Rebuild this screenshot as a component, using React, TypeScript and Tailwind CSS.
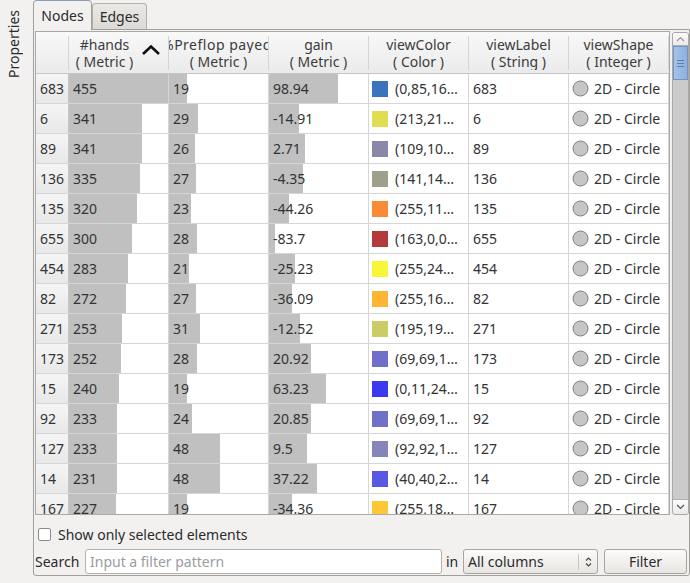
import React from "react";

type Row = {
  id: string;
  h: number;
  hw: number;
  p: number;
  pw: number;
  g: string;
  gw: number;
  c: string;
  ct: string;
};

const rows: Row[] = [
  { id: "683", h: 455, hw: 99, p: 19, pw: 18, g: "98.94", gw: 69, c: "#3a74be", ct: "(0,85,16…" },
  { id: "6", h: 341, hw: 73, p: 29, pw: 29, g: "-14.91", gw: 30, c: "#dede50", ct: "(213,21…" },
  { id: "89", h: 341, hw: 73, p: 26, pw: 26, g: "2.71", gw: 36, c: "#8b87a9", ct: "(109,10…" },
  { id: "136", h: 335, hw: 71, p: 27, pw: 27, g: "-4.35", gw: 34, c: "#a0a08a", ct: "(141,14…" },
  { id: "135", h: 320, hw: 68, p: 23, pw: 22, g: "-44.26", gw: 20, c: "#fa8a35", ct: "(255,11…" },
  { id: "655", h: 300, hw: 63, p: 28, pw: 28, g: "-83.7", gw: 6, c: "#b5393a", ct: "(163,0,0…" },
  { id: "454", h: 283, hw: 59, p: 21, pw: 20, g: "-25.23", gw: 26, c: "#f8f638", ct: "(255,24…" },
  { id: "82", h: 272, hw: 57, p: 27, pw: 27, g: "-36.09", gw: 23, c: "#fdb634", ct: "(255,16…" },
  { id: "271", h: 253, hw: 53, p: 31, pw: 31, g: "-12.52", gw: 31, c: "#cccc66", ct: "(195,19…" },
  { id: "173", h: 252, hw: 52, p: 28, pw: 28, g: "20.92", gw: 42, c: "#7070c8", ct: "(69,69,1…" },
  { id: "15", h: 240, hw: 50, p: 19, pw: 18, g: "63.23", gw: 57, c: "#3a3af0", ct: "(0,11,24…" },
  { id: "92", h: 233, hw: 48, p: 24, pw: 23, g: "20.85", gw: 42, c: "#7070c8", ct: "(69,69,1…" },
  { id: "127", h: 233, hw: 48, p: 48, pw: 51, g: "9.5", gw: 38, c: "#8585b9", ct: "(92,92,1…" },
  { id: "14", h: 231, hw: 48, p: 48, pw: 51, g: "37.22", gw: 48, c: "#5858e0", ct: "(40,40,2…" },
  { id: "167", h: 227, hw: 47, p: 19, pw: 18, g: "-34.36", gw: 23, c: "#fdc834", ct: "(255,18…" },
];

function HeaderCell({
  top,
  bottom,
  sort,
  clipTop,
}: {
  top: string;
  bottom: string;
  sort?: boolean;
  clipTop?: boolean;
}) {
  return (
    <div className="w-[100px] h-full flex items-center">
      <div className="flex-1 h-full flex items-center overflow-hidden">
        <div className="flex-1 flex flex-col items-center justify-center leading-[17px] overflow-hidden whitespace-nowrap">
          {clipTop ? (
            <div className="w-full flex overflow-hidden">
              <span className="-ml-[7px] tracking-[0.5px]">{top}</span>
            </div>
          ) : (
            <span>{top}</span>
          )}
          <span>{bottom}</span>
        </div>
        {sort && (
          <div className="w-[28px] flex items-center justify-start pl-[1px] -mt-[5px]">
            <svg width="20" height="12" viewBox="0 0 20 12">
              <polyline points="2,10 10,2.5 18,10" fill="none" stroke="#111" strokeWidth="2.6" />
            </svg>
          </div>
        )}
      </div>
      <div className="w-px h-[34px] bg-[#d4d4d4]" />
    </div>
  );
}

function BarCell({ w, text }: { w: number; text: string }) {
  return (
    <div className="w-[100px] h-full border-r border-[#d6d6d6] relative flex items-center pl-[4px]">
      <div className="absolute left-0 top-0 bottom-0 bg-[#c0c0c0]" style={{ width: w }} />
      <span className="relative">{text}</span>
    </div>
  );
}

export default function App() {
  return (
    <div className="w-[690px] h-[583px] bg-[#f2f1f0] flex text-[14px] text-[#3c3c3c] font-['Noto_Sans',sans-serif] overflow-hidden">
      {/* side label */}
      <div className="w-[33px] flex items-start pl-[7px] pt-[10px]">
        <span className="[writing-mode:vertical-rl] rotate-180 leading-[14px] text-[#2b2b2b]">Properties</span>
      </div>

      <div className="w-[657px] flex flex-col">
        {/* tabs */}
        <div className="h-[29px] flex items-end relative z-10">
          <div className="w-[59px] h-[30px] -mb-px border border-b-0 border-[#a39f9a] border-t-[#8d9db3] rounded-t-[4px] bg-[#f2f1f0] flex items-center justify-center text-[#2b2b2b]">
            Nodes
          </div>
          <div className="w-[55px] h-[26px] border border-b-0 border-[#b3afaa] rounded-t-[4px] bg-gradient-to-b from-[#ebe9e6] to-[#dcdad6] flex items-center justify-center text-[#2b2b2b]">
            Edges
          </div>
        </div>

        {/* panel */}
        <div className="w-[657px] h-[547px] border border-[#a39f9a] rounded-b-[3px] bg-[#f2f1f0] flex flex-col">
          <div className="mt-[1px] ml-[1px] h-[484px] flex">
            {/* table */}
            <div className="w-[635px] h-[484px] border border-[#a9a9a9] bg-white flex flex-col overflow-hidden text-[#333]">
              <div className="h-[42px] border-b border-[#c6c6c6] flex bg-gradient-to-b from-[#f8f8f8] to-[#ebebeb] text-[#3c3c3c]">
                <div className="w-[33px] h-full flex items-center">
                  <div className="flex-1" />
                  <div className="w-px h-[34px] bg-[#d4d4d4]" />
                </div>
                <HeaderCell top="#hands" bottom="( Metric )" sort />
                <HeaderCell top="%Preflop payed" bottom="( Metric )" clipTop />
                <HeaderCell top="gain" bottom="( Metric )" />
                <HeaderCell top="viewColor" bottom="( Color )" />
                <HeaderCell top="viewLabel" bottom="( String )" />
                <HeaderCell top="viewShape" bottom="( Integer )" />
              </div>
              <div className="flex-1 overflow-hidden">
                {rows.map((r) => (
                  <div key={r.id} className="h-[30px] flex border-b border-[#d6d6d6]">
                    <div className="w-[33px] h-full border-r border-[#c6c6c6] bg-gradient-to-b from-[#f5f5f5] to-[#e8e8e8] flex items-center pl-[4px]">
                      {r.id}
                    </div>
                    <BarCell w={r.hw} text={String(r.h)} />
                    <BarCell w={r.pw} text={String(r.p)} />
                    <BarCell w={r.gw} text={r.g} />
                    <div className="w-[100px] h-full border-r border-[#d6d6d6] flex items-center pl-[3px] whitespace-nowrap overflow-hidden">
                      <div className="w-[16px] h-[16px] shrink-0" style={{ backgroundColor: r.c }} />
                      <span className="ml-[7px]">{r.ct}</span>
                    </div>
                    <div className="w-[100px] h-full border-r border-[#d6d6d6] flex items-center pl-[4px]">{r.id}</div>
                    <div className="w-[100px] h-full border-r border-[#d6d6d6] flex items-center pl-[3px] whitespace-nowrap">
                      <svg width="17" height="17" viewBox="0 0 17 17" className="shrink-0">
                        <circle cx="8.5" cy="8.5" r="7.5" fill="#c6c6c6" stroke="#7d7d7d" strokeWidth="1" />
                      </svg>
                      <span className="ml-[5px]">2D - Circle</span>
                    </div>
                  </div>
                ))}
              </div>
            </div>

            {/* scrollbar */}
            <div className="ml-[2px] w-[17px] h-[484px] flex flex-col pt-[1px]">
              <div className="flex-1 border border-[#a8a8a8] rounded-[3px] bg-[#cbcbcb] flex flex-col overflow-hidden">
                <div className="h-[13px] bg-gradient-to-b from-[#fbfbfb] to-[#eaeaea] border-b border-[#b0b0b0] flex items-center justify-center">
                  <svg width="9" height="6" viewBox="0 0 9 6">
                    <polyline points="1,5 4.5,1.5 8,5" fill="none" stroke="#9a9a9a" strokeWidth="1.2" />
                  </svg>
                </div>
                <div className="h-[34px] bg-gradient-to-r from-[#a7c2e6] to-[#8fb0dc] border border-[#7195c8] flex flex-col items-center justify-center gap-[2px]">
                  <div className="w-[7px] h-px bg-[#5f7fae]" />
                  <div className="w-[7px] h-px bg-[#5f7fae]" />
                  <div className="w-[7px] h-px bg-[#5f7fae]" />
                </div>
                <div className="flex-1" />
                <div className="h-[15px] bg-gradient-to-b from-[#fbfbfb] to-[#eaeaea] border-t border-[#b0b0b0] flex items-center justify-center">
                  <svg width="9" height="6" viewBox="0 0 9 6">
                    <polyline points="1,1 4.5,4.5 8,1" fill="none" stroke="#555" strokeWidth="1.2" />
                  </svg>
                </div>
              </div>
            </div>
          </div>

          {/* checkbox row */}
          <div className="mt-[13px] h-[13px] flex items-center pl-[4px]">
            <div className="w-[13px] h-[13px] border border-[#8c8c8c] rounded-[2px] bg-white" />
            <span className="ml-[7px] text-[#2b2b2b]">Show only selected elements</span>
          </div>

          {/* search row */}
          <div className="mt-[8px] h-[25px] flex items-center pl-[1px] text-[#2b2b2b]">
            <span className="w-[50px]">Search</span>
            <input
              className="w-[357px] h-[25px] border border-[#b5b1ac] rounded-[3px] bg-white pl-[4px] outline-none placeholder:text-[#9c9c9c]"
              placeholder="Input a filter pattern"
            />
            <span className="w-[17px] pl-[4px]">in</span>
            <div className="ml-[4px] w-[135px] h-[25px] border border-[#a8a49f] rounded-[3px] bg-gradient-to-b from-[#fbfbfa] to-[#e8e6e3] flex items-center pl-[4px]">
              <span className="flex-1">All columns</span>
              <div className="w-px h-[16px] bg-[#c8c5c1]" />
              <div className="w-[18px] flex items-center justify-center">
                <svg width="7" height="12" viewBox="0 0 7 12">
                  <polyline points="1,4.5 3.5,2 6,4.5" fill="none" stroke="#444" strokeWidth="1.1" />
                  <polyline points="1,7.5 3.5,10 6,7.5" fill="none" stroke="#444" strokeWidth="1.1" />
                </svg>
              </div>
            </div>
            <div className="ml-[6px] w-[83px] h-[25px] border border-[#a8a49f] rounded-[3px] bg-gradient-to-b from-[#fbfbfa] to-[#e8e6e3] flex items-center justify-center">
              Filter
            </div>
          </div>
        </div>
      </div>
    </div>
  );
}
